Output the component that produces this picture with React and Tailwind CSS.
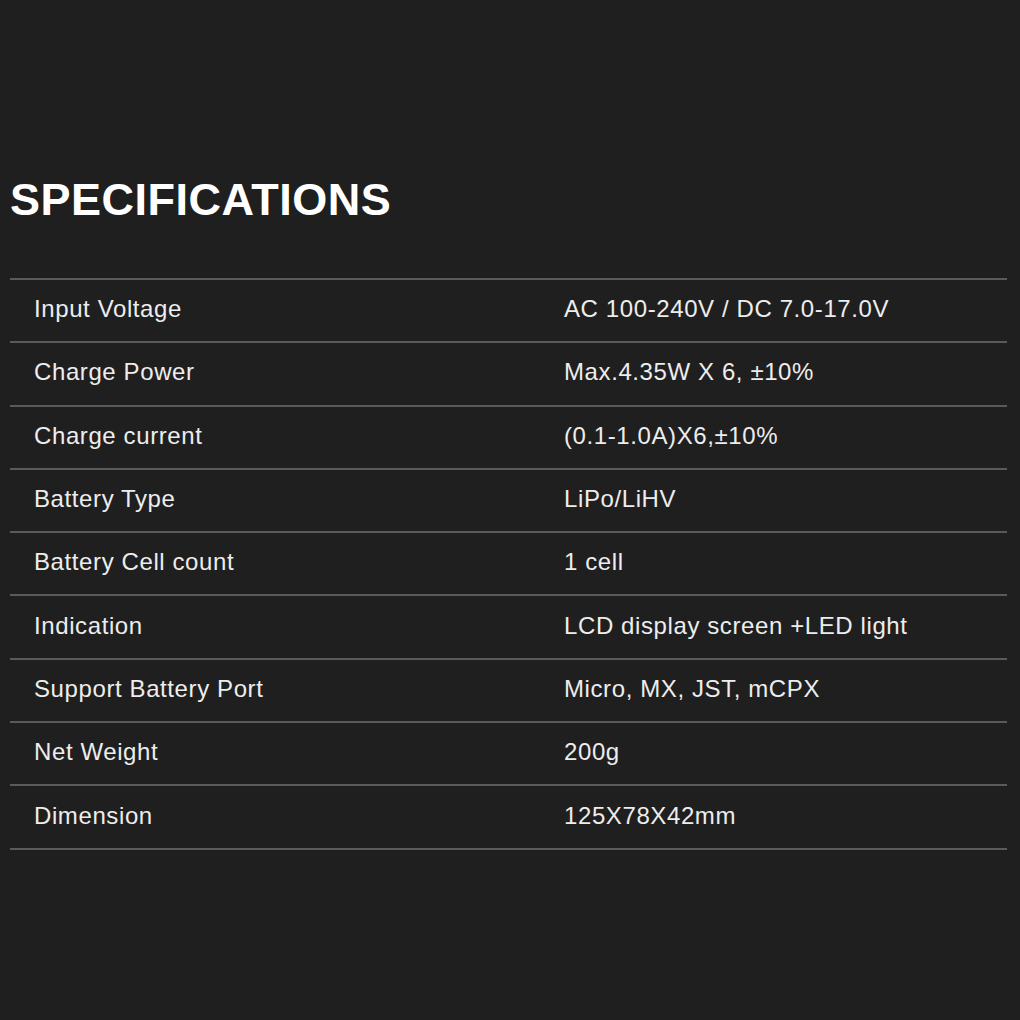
const rows = [
  ["Input Voltage", "AC 100-240V / DC 7.0-17.0V"],
  ["Charge Power", "Max.4.35W X 6, ±10%"],
  ["Charge current", "(0.1-1.0A)X6,±10%"],
  ["Battery Type", "LiPo/LiHV"],
  ["Battery Cell count", "1 cell"],
  ["Indication", "LCD display screen +LED light"],
  ["Support Battery Port", "Micro, MX, JST, mCPX"],
  ["Net Weight", "200g"],
  ["Dimension", "125X78X42mm"],
];

export default function App() {
  return (
    <div
      className="w-[1020px] h-[1020px] bg-[#1f1f1f] text-[#ededed] overflow-hidden"
      style={{ fontFamily: '"Liberation Sans", Arial, sans-serif' }}
    >
      <div className="pt-[177px] pl-[10px]">
        <h1 className="text-[45px] leading-[45px] font-bold text-white tracking-[0.5px]">
          SPECIFICATIONS
        </h1>
      </div>
      <div className="mt-[56px] ml-[10px] w-[997px] border-t-2 border-[#5a5a5a]">
        {rows.map(([k, v]) => (
          <div
            key={k}
            className="grid grid-cols-[530px_1fr] items-center h-[63.3px] border-b-2 border-[#5a5a5a] pl-[24px] pb-[3px] text-[24px] tracking-[0.6px]"
          >
            <div>{k}</div>
            <div>{v}</div>
          </div>
        ))}
      </div>
    </div>
  );
}
